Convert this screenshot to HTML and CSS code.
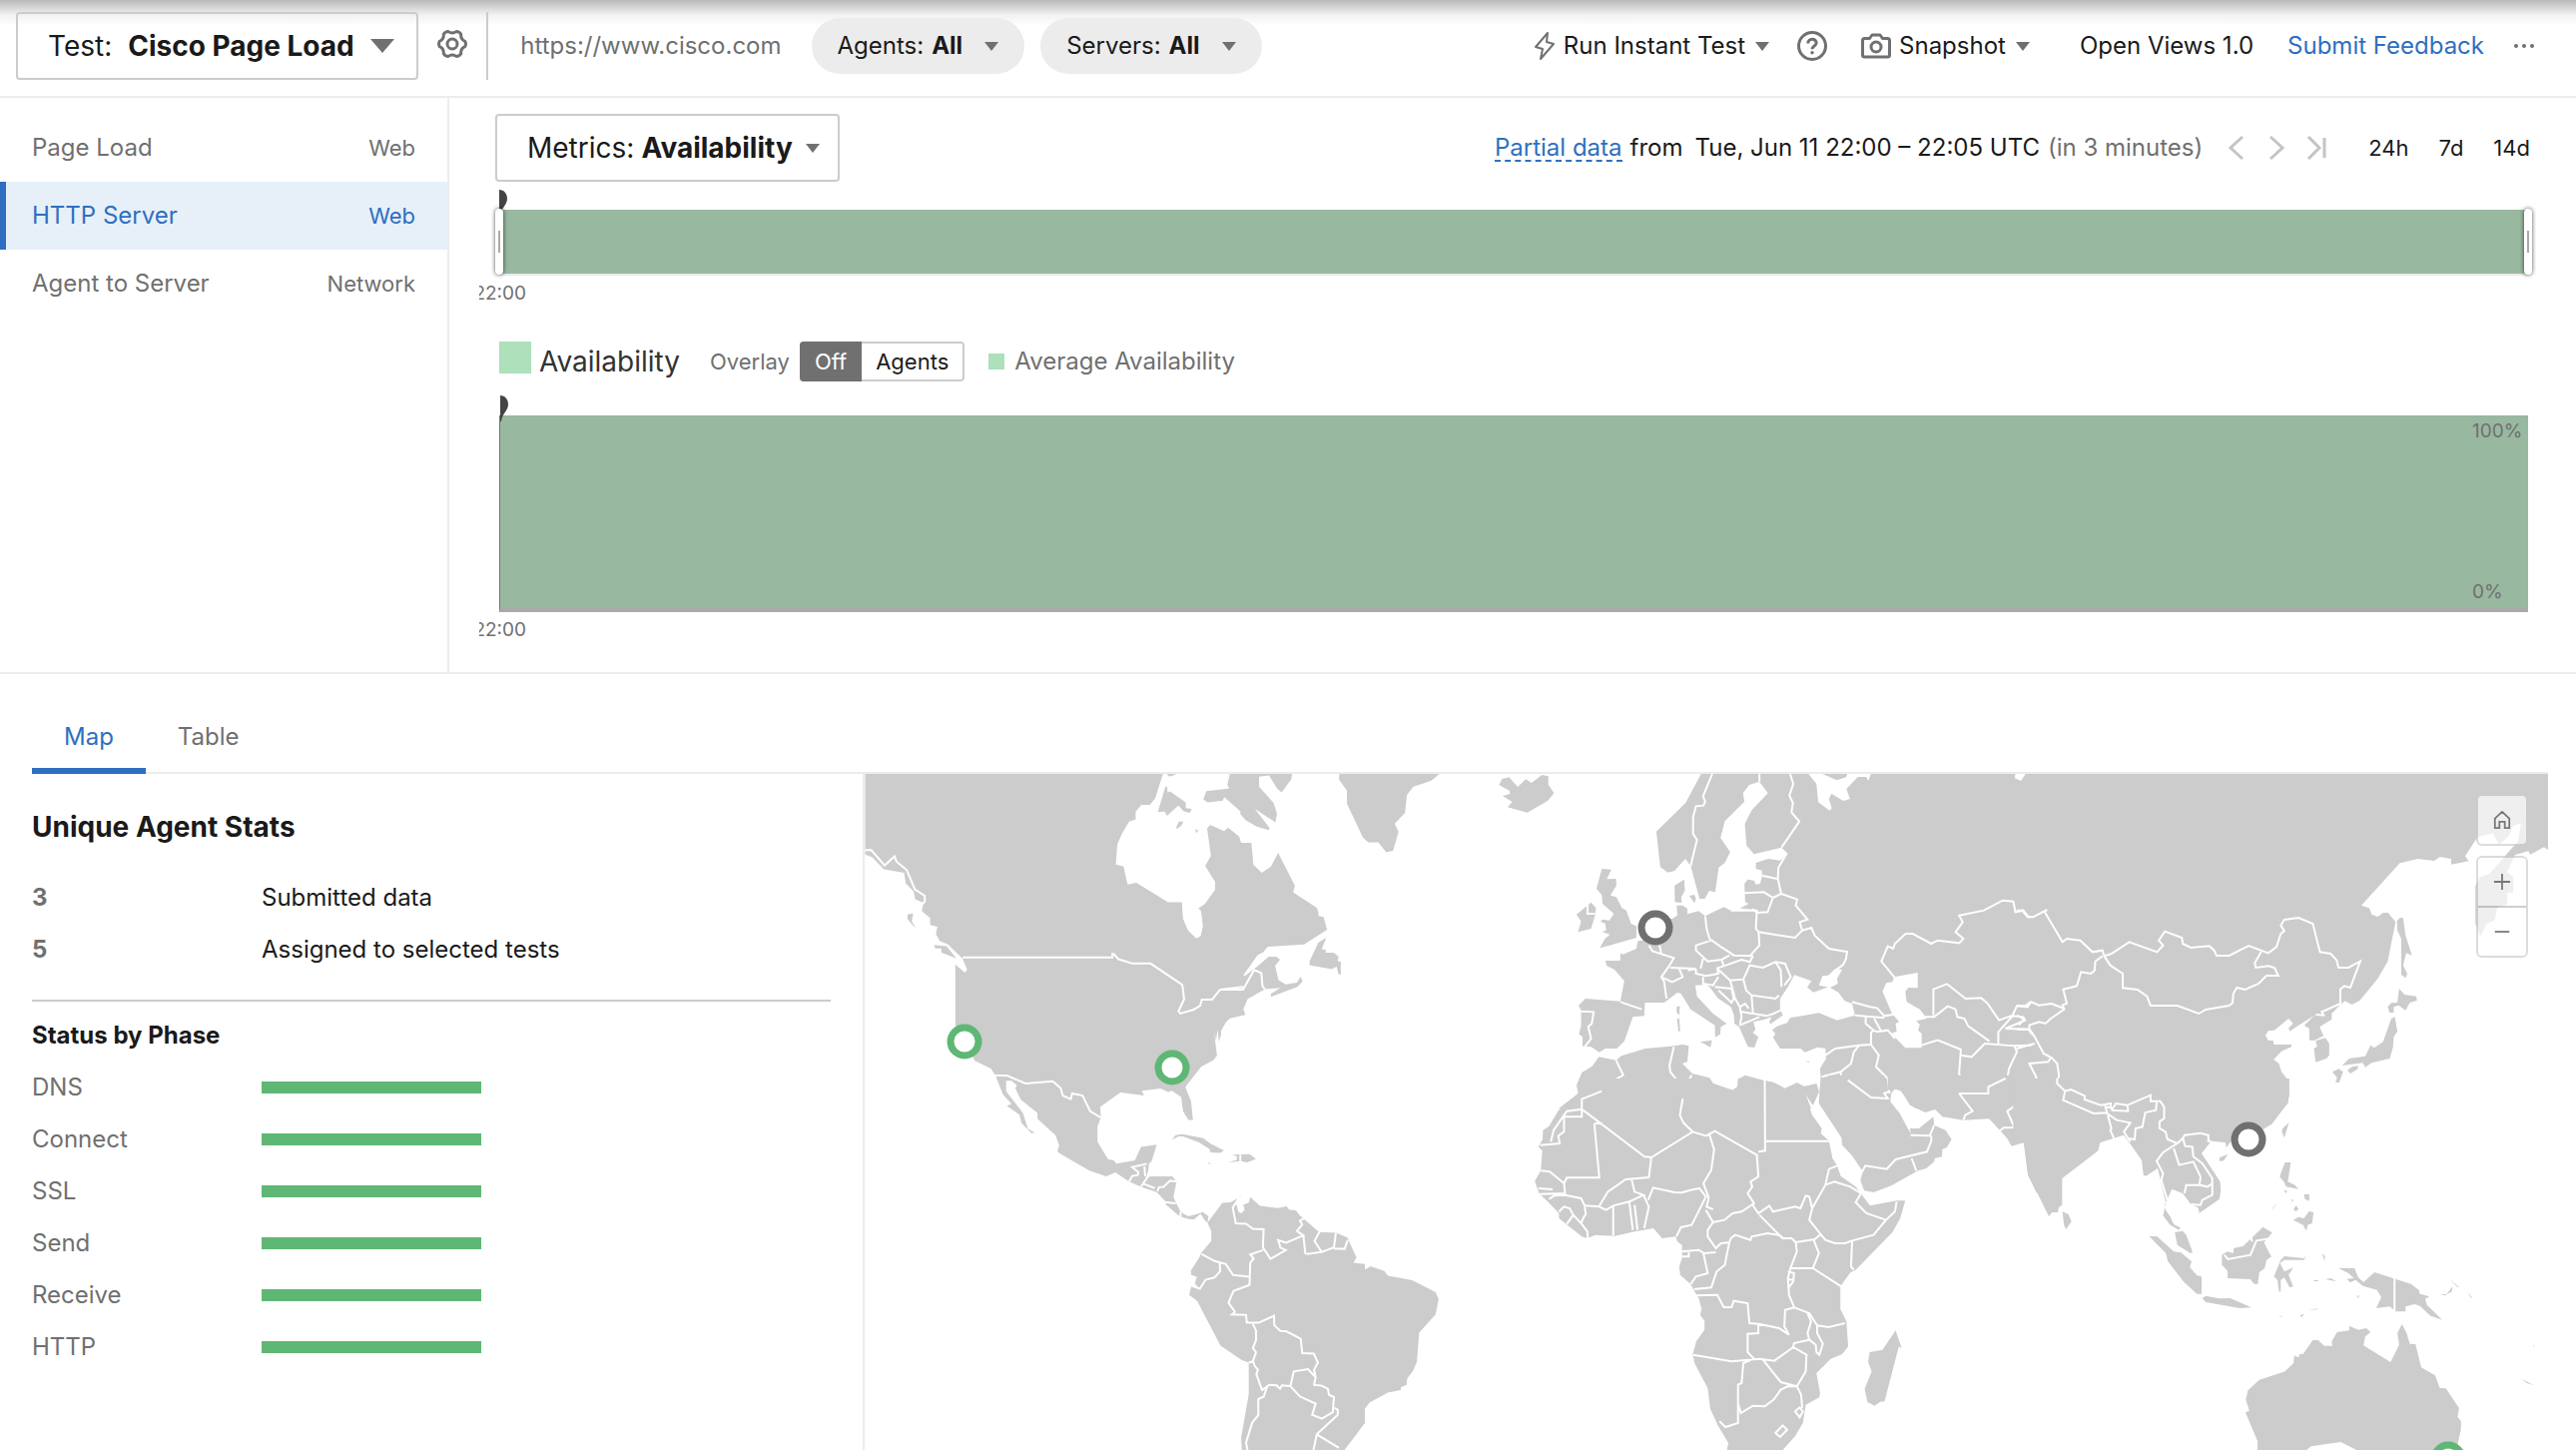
FILE: index.html
```html
<!DOCTYPE html>
<html lang="en">

<head>
    <meta charset="UTF-8">
    <meta name="viewport" content="width=device-width, initial-scale=1.0">
    <title>Cisco Page Load - Views</title>
    <link rel="stylesheet" href="styles.css">
</head>

<body>
    <header class="topbar">
        <div class="picker picker-test">
            <label for="test">Test:</label>
            <select id="test">
                <option>Cisco Page Load</option>
            </select>
            <svg class="caret caret-large" viewBox="0 0 24 14"><path d="M0 0H24L12 14Z"/></svg>
        </div>
        <button class="icon-button settings" type="button" aria-label="Test settings">
            <svg class="icon" viewBox="0 0 30 30"><path d="M27.700 12.300Q29.200 15 27.700 17.700Q23.200 19.800 23.700 24.700Q22.100 27.300 19 27.400Q15 24.500 11 27.400Q7.900 27.300 6.300 24.700Q6.800 19.800 2.300 17.700Q.8 15 2.300 12.300Q6.800 10.200 6.300 5.300Q7.900 2.700 11 2.600Q15 5.500 19 2.600Q22.100 2.700 23.700 5.300Q23.200 10.200 27.700 12.300Z"/><circle cx="15" cy="15" r="5"/></svg>
        </button>
        <div class="divider"></div>
        <span class="url">https://www.cisco.com</span>
        <div class="pill">
            <label for="agents">Agents:</label>
            <select id="agents">
                <option>All</option>
            </select>
            <svg class="caret" viewBox="0 0 14 9"><path d="M0 0H14L7 9Z"/></svg>
        </div>
        <div class="pill">
            <label for="servers">Servers:</label>
            <select id="servers">
                <option>All</option>
            </select>
            <svg class="caret" viewBox="0 0 14 9"><path d="M0 0H14L7 9Z"/></svg>
        </div>
        <div class="actions">
            <button class="action" type="button">
                <svg class="icon icon-bolt" viewBox="0 0 22 30"><path d="M14 2L2 16L9 18L7 28L20 13L13 11Z"/></svg>
                Run Instant Test
                <svg class="caret" viewBox="0 0 14 9"><path d="M0 0H14L7 9Z"/></svg>
            </button>
            <button class="icon-button help" type="button" aria-label="Help">
                <svg class="icon" viewBox="0 0 30 30"><circle cx="15" cy="15" r="13.500"/><path d="M10.800 12.500C10.800 7 19.200 7 19.200 12C19.200 15 15 15 15 18.200"/><circle class="dot" cx="15" cy="21.800" r="1.700"/></svg>
            </button>
            <button class="action" type="button">
                <svg class="icon" viewBox="0 0 30 30"><path d="M3.500 7.500H8.500L11 4H19L21.500 7.500H26.500Q28.500 7.500 28.500 9.500V24Q28.500 26 26.500 26H3.500Q1.500 26 1.500 24V9.500Q1.500 7.500 3.500 7.500Z"/><circle cx="15" cy="16" r="5"/></svg>
                Snapshot
                <svg class="caret" viewBox="0 0 14 9"><path d="M0 0H14L7 9Z"/></svg>
            </button>
            <a class="open-views" href="#">Open Views 1.0</a>
            <a class="feedback" href="#">Submit Feedback</a>
            <button class="icon-button" type="button" aria-label="More">
                <svg class="dots" viewBox="0 0 20 4"><circle cx="2" cy="2" r="2"/><circle cx="10" cy="2" r="2"/><circle cx="18" cy="2" r="2"/></svg>
            </button>
        </div>
    </header>

    <div class="overview">
        <nav class="sidebar">
            <a href="#"><span>Page Load</span><small>Web</small></a>
            <a class="active" href="#"><span>HTTP Server</span><small>Web</small></a>
            <a href="#"><span>Agent to Server</span><small>Network</small></a>
        </nav>

        <main class="charts">
            <div class="chart-toolbar">
                <div class="picker picker-metrics">
                    <label for="metrics">Metrics:</label>
                    <select id="metrics">
                        <option>Availability</option>
                    </select>
                    <svg class="caret" viewBox="0 0 14 9"><path d="M0 0H14L7 9Z"/></svg>
                </div>
                <div class="time-range">
                    <a class="partial" href="#">Partial data</a>
                    <span>from</span>
                    <span class="date">Tue, Jun 11 22:00 – 22:05 UTC</span>
                    <span class="muted">(in 3 minutes)</span>
                </div>
                <div class="pager">
                    <button type="button" aria-label="Previous"><svg viewBox="0 0 20 26"><path d="M16 2L4 13L16 24"/></svg></button>
                    <button type="button" aria-label="Next"><svg viewBox="0 0 20 26"><path d="M4 2L16 13L4 24"/></svg></button>
                    <button type="button" aria-label="Latest"><svg viewBox="0 0 20 26"><path d="M2 2L13 13L2 24M18 3V23"/></svg></button>
                </div>
                <div class="ranges">
                    <button type="button">24h</button>
                    <button type="button">7d</button>
                    <button type="button">14d</button>
                </div>
            </div>

            <div class="timeline">
                <svg class="pin" viewBox="0 0 8 26"><path d="M0 0C5 0 8 4 8 9C8 15 2 18 1 26H0Z"/></svg>
                <div class="handle handle-start"></div>
                <div class="handle handle-end"></div>
            </div>
            <div class="axis-label">22:00</div>

            <div class="legend">
                <span class="swatch"></span>
                <h2>Availability</h2>
                <span class="overlay-label">Overlay</span>
                <div class="toggle">
                    <button class="on" type="button">Off</button>
                    <button type="button">Agents</button>
                </div>
                <span class="swatch swatch-small"></span>
                <span class="muted">Average Availability</span>
            </div>

            <div class="plot">
                <svg class="pin" viewBox="0 0 8 26"><path d="M0 0C5 0 8 4 8 9C8 15 2 18 1 26H0Z"/></svg>
                <span>100%</span>
                <span>0%</span>
            </div>
            <div class="axis-label">22:00</div>
        </main>
    </div>

    <section class="details">
        <div class="tabs">
            <button class="active" type="button">Map</button>
            <button type="button">Table</button>
        </div>
        <div class="panels">
            <div class="stats">
                <h2>Unique Agent Stats</h2>
                <table>
                    <tr><th class="count">3</th><td>Submitted data</td></tr>
                    <tr><th class="count">5</th><td>Assigned to selected tests</td></tr>
                </table>
                <hr>
                <h3>Status by Phase</h3>
                <table>
                    <tr><th>DNS</th><td><div class="bar"></div></td></tr>
                    <tr><th>Connect</th><td><div class="bar"></div></td></tr>
                    <tr><th>SSL</th><td><div class="bar"></div></td></tr>
                    <tr><th>Send</th><td><div class="bar"></div></td></tr>
                    <tr><th>Receive</th><td><div class="bar"></div></td></tr>
                    <tr><th>HTTP</th><td><div class="bar"></div></td></tr>
                </table>
            </div>

            <div class="map">
                <svg class="world" viewBox="866 775 1686 677" preserveAspectRatio="xMinYMin slice">
                    <!-- Americas -->
                    <g transform="translate(860 770) scale(.38265 .43495)">
                        <path class="land" d="M17 10 797 10 776 68 762 83 740 83 725 98 725 116 708 121 690 148 677 173 673 220 693 224 704 266 727 262 810 307 846 307 849 345 862 372 884 390 895 385 901 362 896 327 889 321 905 312 933 278 933 260 907 223 922 200 912 137 920 129 957 143 967 135 996 156 1001 170 1028 170 1033 220 1055 239 1079 225 1098 193 1142 269 1137 284 1200 320 1205 339 1217 341 1226 370 1166 404 1071 409 1059 422 1044 429 1007 475 1010 477 1043 455 1073 432 1093 432 1103 439 1090 453 1099 486 1118 496 1147 492 1157 478 1162 489 1148 502 1079 525 1079 518 1104 504 1063 507 1018 530 1007 553 1012 566 972 574 962 582 948 604 949 610 943 628 940 600 935 625 930 603 935 640 938 660 928 671 897 685 855 732 870 765 875 808 863 808 849 788 844 755 820 741 810 744 790 736 741 741 747 752 685 745 632 778 634 803 625 823 625 858 653 899 668 901 674 909 723 901 739 870 780 865 767 903 760 909 758 925 752 942 765 938 821 938 832 950 824 985 830 998 843 1020 863 1030 885 1025 901 1020 916 1030 913 1045 905 1038 895 1024 878 1037 866 1037 840 1030 804 1003 801 994 780 974 762 969 739 962 708 950 672 929 648 938 604 925 526 885 520 880 525 867 515 843 468 805 468 792 424 761 410 735 414 728 400 718 386 718 386 742 430 792 443 828 460 837 453 839 426 815 421 796 388 776 400 771 378 750 358 706 346 690 304 672 285 640 253 590 253 450 278 469 284 462 272 437 234 404 212 396 202 380 206 363 187 359 187 343 165 327 170 308 148 300 144 282 123 263 119 239 66 231 35 203 17 197Z"/>
                        <path class="land" d="M803 40 808 42 808 54 815 52 856 77 856 90 872 92 866 101 850 97 837 84 807 108 801 98 783 99ZM830 137 838 121 850 121 846 129 836 137ZM881 138 889 142 884 148ZM805 10H833L824 15 812 17ZM972 10H1135L1132 24 1107 54 1095 45 1074 15 1048 18 1048 41 1086 78 1095 103 1091 123 1037 92 1076 136 1073 141 1042 133 1012 117 998 103 1000 98 957 65 953 73 914 77 902 70 910 51 970 45 965 36ZM1258 10H1522L1499 27 1452 41 1435 60 1430 101 1403 126 1413 145 1399 188 1381 192 1360 169 1334 169 1320 158 1278 80 1278 50 1257 24ZM1180 443 1203 400 1224 388 1212 415 1223 417 1222 423 1244 423 1256 432 1254 443 1262 444 1262 473 1256 473 1251 455 1238 461 1180 452ZM198 405 230 408 256 436 217 423 216 413 200 413ZM128 335 143 333 139 350 150 368 128 346ZM820 854 829 843 848 841 902 850 921 863 956 878 946 884 921 883 918 875 891 860 849 846 837 846ZM978 888 1023 887 1040 898 1017 906 1000 903 967 906 990 900 990 892ZM913 906 923 908 918 910Z"/>
                        <path class="land" d="M913 1045 952 999 974 998 1001 984 988 1000 994 1020 1002 1023 1010 1015 1007 1003 1021 999 1025 986 1050 1006 1097 1011 1120 1007 1127 1015 1144 1016 1155 1028 1205 1066 1250 1068 1279 1079 1303 1125 1295 1137 1325 1140 1325 1153 1340 1145 1376 1156 1385 1167 1449 1177 1510 1205 1518 1221 1510 1256 1467 1298 1461 1365 1451 1386 1436 1403 1434 1418 1419 1424 1419 1430 1385 1436 1337 1459 1325 1473 1325 1506 1270 1570H1003L1001 1540 1021 1440 1021 1367 1003 1361 947 1328 886 1225 865 1211 871 1190 893 1197 880 1185 885 1169 870 1165 870 1154 890 1127 898 1113 923 1087 923 1064Z"/>
                        <path class="border" d="M272 434H664V426H668L680 438 717 448 764 448 847 497 852 530 837 558 842 563 877 554 894 545 898 531 925 531 946 508 1006 508 1035 463 1054 470 1057 500 1063 507M1006 502 946 508M17 187 33 187 68 222 94 201 99 213 126 233 147 277 173 292 173 306 165 312M357 706 388 706 437 724 508 719 529 735 534 752 555 760 559 747 586 752 606 788 634 803M708 950 716 937 731 935 732 928 716 917 754 909M748 915 750 938M756 940 739 962M745 955 775 965M782 972 786 963 798 962 815 948 832 950M801 997 830 1000M843 1020 842 1032M999 888V904"/>
                        <path class="border" d="M997 986 979 1010 987 1046 1014 1047 1032 1059 1060 1060 1058 1102 1078 1128 1118 1108 1104 1102 1098 1085 1119 1091 1164 1074 1147 1064 1161 1049 1155 1040 1168 1034M1164 1074 1169 1115 1174 1117 1212 1112 1193 1087 1206 1066M1212 1112 1244 1102 1249 1068M1244 1104 1272 1105 1280 1085M1058 1108 1025 1118 1034 1127 1025 1137 1023 1188 981 1202 968 1229 985 1250 977 1256 1014 1257 1016 1275 1047 1275 1087 1259 1088 1281 1104 1294 1120 1295 1157 1312 1161 1345 1191 1346 1202 1367 1192 1383 1196 1400 1192 1418 1212 1420 1228 1427 1231 1441 1244 1446 1241 1481 1212 1496 1187 1487 1196 1461 1155 1445 1130 1421 1139 1387 1176 1382 1196 1400M1130 1421 1108 1419 1103 1427 1094 1419 1075 1418 1056 1430 1041 1394 1045 1383 1037 1375 1032 1363 1040 1343 1032 1333 1040 1315 1040 1293 1032 1278M1032 1363 1021 1367M1070 1420 1060 1445 1046 1451 1046 1488 1030 1505 1014 1551 1018 1570M898 1117 932 1133 961 1140 980 1165 1023 1169M945 1136 946 1157 931 1171 908 1176 893 1197 871 1190M1244 1471 1254 1475 1254 1487 1199 1532 1190 1570M1199 1532 1257 1563"/>
                    </g>
                    <!-- Europe and western Asia -->
                    <g transform="translate(1480 770) scale(.35714 .33333)">
                        <path class="land" d="M60 48 68 30 88 25 112 54 135 31 151 42 180 18 198 22 198 47 214 73 196 96 139 131 84 115 97 99 70 81 91 75 89 65ZM627 14H788L790 38 761 48 744 73 748 98 693 157 681 207 708 250 693 282 676 296 666 370 649 366 637 390 622 390 597 290 582 270 552 306 533 311 512 295 501 188 583 102ZM553 400 552 350 579 332 581 365 571 385 572 402ZM593 381 608 378 612 390 608 403ZM348 300 375 302 362 331 388 330 389 350 372 380 389 385 404 417 417 425 430 465 445 472 445 507 365 532 342 538 357 510 371 497 348 490 360 485 358 465 344 458 351 452 369 455 382 435 350 405 348 378 333 360ZM277 437 318 401 332 418 329 440 318 480 281 490 290 458ZM558 715 567 712 565 740 558 730ZM559 752 565 748 568 788 563 788ZM624 820 657 815 653 836ZM918 878H932L928 881Z"/>
                        <path class="land" d="M788 14H927L950 45 955 100 987 125 993 118 985 90 992 74 1025 96 1044 90 1034 60 1066 24 1090 24 1095 36 1103 14H1508L1506 28 1524 36 1538 14H1568V1020H1228L1212 1005 1186 967 1170 961 1160 975 1157 1000 1172 1020H985L957 1000 962 925 960 900 977 870 975 840 953 836 918 851 905 840 848 840 828 806 835 796 826 784 842 772 868 763 876 748 957 733 1008 755 1058 740 1050 705 1029 697 1012 672 985 655 941 671 924 656 936 637 888 619 870 655 848 690 848 722 856 740 823 765 817 763 824 745 806 752 773 760 779 782 772 793 787 805 776 837 758 835 733 775 720 765 718 737 710 715 675 690 650 655 640 648 610 650 615 683 660 735 698 765 682 775 680 797 666 806 665 770 597 722 570 675 560 672 523 702 469 702 467 742 435 745 411 818 390 840 358 840 341 851 318 835 294 833 294 805 284 797 290 770 290 725 283 710 302 690 400 698 411 637 383 602 362 592 358 576 400 576 400 553 408 557 445 540 449 517 462 515 500 450 545 450 560 440 558 410 575 410 588 420 588 436 620 427 638 442 690 415 710 425 775 420 735 419 760 405 750 400 748 345 757 332 775 335 780 347 792 345 797 325 797 305 780 300 780 282 815 270 848 275 870 255 852 236 775 256 754 230 749 165 769 123 814 73 790 38ZM965 14H1037L1033 25 1007 34Z"/>
                        <path class="land" d="M227 1020 282 975 277 950 292 912 321 893 340 865 388 875 403 862 470 840 540 833 575 828 592 832 588 880 574 885 602 915 650 928 660 945 715 965 730 955 733 930 750 920 800 935 830 942 862 960 895 943 915 953 950 947 957 970 940 1010 918 973 935 1020Z"/>
                        <path class="water" d="M957 650 967 622 983 620 1003 600 1022 603 1008 630 1010 645 988 657ZM1168 625 1234 612V658L1208 657 1199 668 1203 700 1240 722 1260 750 1230 757 1240 768 1235 785 1245 795 1245 838 1199 838 1160 795 1175 788 1172 765 1182 760 1162 735 1135 668 1146 643 1163 640Z"/>
                        <path class="border" d="M658 14 632 82 638 98 633 110 612 112 604 145 604 195 615 213 597 292M790 14V38M876 14 885 45 874 80 884 102 880 130 902 158 852 236M866 255 843 297 842 330 851 375 896 392 892 410 925 452 903 460 910 485 936 477 945 500 985 540 1036 549 1033 570 1025 588 1003 605M797 320 840 330M748 373 803 370 828 387 851 375M828 387 813 430 783 432 770 420M710 425 783 425 780 480 788 490 890 507 908 487M788 490 790 530 765 560M638 442 642 480 650 510 683 535 705 550 718 560 772 562M655 515 612 530 612 545 645 578 684 573 706 560M684 573 690 592 740 573 763 580 772 562M632 570 625 600M540 597 612 600 590 605M612 600 612 615 640 622 675 615 672 598 690 592M480 530 490 547 550 568 538 590 515 625 523 640 528 680 530 690M510 530 515 555M565 600 575 625 545 640 515 625M672 600 708 635 745 632 763 590 800 597 835 580 862 585 878 625 860 650M835 580 850 605 852 655M745 632 753 665 768 680 835 690 845 680M768 680 772 735 810 742 830 735 850 725M632 625 632 645 660 650 675 625M665 655 712 660 718 690 710 705M675 665 710 700M708 635 722 690 735 715M735 770 740 745 735 715 750 705 760 720M740 730 770 735M735 770 790 745M400 700 460 722M290 728 325 730 320 765 310 775 318 810 300 835M308 408V435H329"/>
                        <path class="border" d="M1050 700 1100 715 1120 718 1140 742 1165 738M1058 740 1140 748M1088 745 1088 765 1110 785 1120 790 1150 785 1170 810M1112 750 1130 785M1110 785 1103 792 1103 828 1070 830 1003 840 975 860M1103 828 1125 860 1117 895 1150 930 1155 975M1070 830 1055 850 1047 885 1018 910 965 925M1018 910 1020 930 1040 935 1103 985 1150 988M1020 930 985 940 1000 962 975 985 957 982M1168 625 1132 578 1150 533 1165 540 1170 525 1200 495 1220 495 1272 525 1290 515 1350 523 1362 510 1340 490 1360 460 1350 440 1420 425 1472 395 1502 398 1508 430 1530 425 1545 445 1568 445M1278 740V662L1316 646 1368 690 1412 688 1430 705 1462 755 1500 740 1512 712 1535 712 1550 700M1245 745 1280 745 1318 713 1340 722 1345 745 1365 750 1375 772 1435 818M1245 830 1290 815 1355 843 1350 915 1365 955 1350 975M1355 860 1385 865 1422 825 1505 832 1512 850 1490 900 1485 930 1435 955M1460 825V790L1500 742 1530 745 1535 755 1480 780 1545 782 1568 822M1505 832 1568 830M388 875 408 920 375 940 348 970 292 992V1020M550 835 538 890 540 910 555 930 575 990 572 1020M600 920 575 965M803 935 805 1020"/>
                    </g>
                    <!-- Africa and Arabia -->
                    <g transform="translate(1480 1080) scale(.35714 .33333)">
                        <path class="land" d="M285 0 282 45 227 95 200 143 183 155 182 183 170 205 181 217 177 277 160 308 172 345 195 368 228 405 228 420 248 437 292 475 307 480 330 470 385 473 440 460 493 450 517 480 555 475 560 490 573 500 573 540 565 565 568 590 597 618 608 640 620 660 628 692 624 710 636 728 636 755 613 790 603 828 608 855 645 930 652 992 675 1045 703 1095 698 1120H852L890 1075 912 1035 920 980 958 958 960 945 950 885 990 842 1022 828 1039 805 1034 730 1017 692 1017 625 1045 583 1060 575 1163 462 1185 420 1199 367 1175 367 1100 382 1078 350 1060 325 1018 293 1008 262 995 240 985 187 962 165 965 150 938 110 918 45 940 80 957 40 950 15 915 25 895 13 862 30 830 12 800 5 750 0 730 0 728 25 715 35 660 15 650 0Z"/>
                        <path class="land" d="M960 20 985 -10H1140L1150 40 1158 72 1182 102 1214 165 1212 150 1237 150 1278 115 1280 140 1312 155 1329 183 1315 208 1303 212 1302 235 1282 240 1280 250 1258 270 1235 277 1160 322 1110 342 1084 337 1073 305 1080 280 1050 232 1022 200 1020 178 957 75ZM1170 32 1188 36 1212 80 1255 102 1283 93 1303 115 1362 125 1434 121 1465 157 1485 180 1497 203 1531 193 1543 290 1568 345V-10H1150L1150 35ZM1172 757 1189 810 1181 805 1141 970 1129 971 1113 983 1093 972 1085 932 1105 880 1095 853 1099 822 1135 815Z"/>
                        <path class="border" d="M1155 38 1140 45 1150 60 1103 57 1038 5M1214 170 1268 172 1280 140M1272 172 1272 188 1260 220 1172 243 1147 272 1087 262 1077 282M1217 240 1230 277M1350 45 1388 98 1367 110 1362 125M1350 45H1432V25L1480 0M1560 0 1535 62 1485 98 1505 147 1475 148 1465 157"/>
                        <path class="border" d="M348 38 292 62V115H242V160L226 172 230 195 175 200M292 92 250 98 213 155 205 190M292 92 468 235 487 237 603 160 577 133 567 110 575 60M327 135H350M327 135 341 298 250 298 242 315 202 280 177 277M242 315 245 345 172 347M170 330 210 333M245 350 290 360 300 382 340 385 365 340 415 303 480 297 487 237M200 362 215 352 245 350M340 385 360 395 380 382 425 370 435 455M380 382V472M425 370 465 350 440 340 432 305M440 380 448 455M465 350 480 385 467 450M478 365 492 328 552 342 572 343 605 333 622 330 640 355 600 440 570 447 557 475M603 160 640 172 665 158 783 230 787 295 765 310 770 325 757 345 775 375 740 400 715 405 692 425 660 432 645 455 645 475 668 510 682 495 703 493M650 170 663 213 655 275 633 315 648 358 642 385 660 393M640 395 660 432M805 0 806 217 787 220M806 188H985M770 378 787 405 818 382 828 400 890 385 905 390 920 352 930 355 938 390 930 425 962 468 945 483 892 492 880 480 855 480 790 410M938 390 975 320 985 272 1008 262M975 320 1000 310 1045 325 1075 345 1060 372 1090 405 1145 425 1170 400 1175 370M1145 425 1110 470 1050 487 1030 495 1002 495 975 485 962 468M1050 487 1047 565 1055 575"/>
                        <path class="border" d="M705 495 710 480 722 470 765 485 768 475 812 465 845 470 860 482M892 492 895 520 877 570 940 570 957 525 942 485M940 570 1020 625M877 570 870 600 873 650 888 688 930 705 952 742 985 747 1030 735M888 688 862 695 860 745 873 770 845 750 787 737 762 735 757 675 718 668 712 687 690 687 672 650 610 652M705 495 693 560 670 580 655 628 607 633M572 520 620 515 635 525 668 522M633 525 640 560 645 585 612 595 597 618M573 535H592V522M787 737 787 765 757 767 757 822 775 842M605 830 712 850 790 842 832 848 885 807 887 795 930 785 925 765 935 730 925 705M930 785 948 800 950 822 958 830 968 797 952 765V742M775 842 745 855 740 915 730 920 730 1035 695 1047 678 1030M730 975 738 1005 772 983 805 985 830 965 850 935 870 925 895 925 907 950 910 990M800 845 850 912 895 925 920 880 922 830 885 807M890 1000 903 988 912 1000 903 1018ZM835 1065 855 1042 868 1055 848 1077ZM228 400 242 385 258 390 268 410 290 435 298 415 303 408 300 385M268 410 250 437M290 435 308 460V480M870 580 887 585 885 610 872 628M870 603 885 605"/>
                    </g>
                    <!-- Northern and eastern Asia -->
                    <g transform="translate(2020 770) scale(.35714 .33333)">
                        <path class="land" d="M25 14H1490V243L1478 235 1440 257 1434 247 1397 258 1375 310 1392 325V372H1375V408L1348 415 1340 455 1318 465 1300 503 1286 465 1286 350 1300 325 1325 315 1392 233 1405 220 1414 163 1392 170 1380 200 1352 228 1335 193 1292 205 1257 262 1267 277 1218 287 1218 270 1187 264 1170 276 1125 270 1074 283 966 410 988 418 995 437 1012 444 1027 432 1041 432 1062 460 1040 578 1012 630 962 695 940 708 920 697 905 710 883 735 883 752 849 775 860 802 835 815H820V780L806 770 835 740 790 770 765 788 762 778 775 765 762 750 722 785 705 787 697 800 705 815 720 817 720 828 770 828 770 835 742 848 720 873 735 885 742 910 764 940 754 955 764 975 760 1005 748 1020H40V36H12Z"/>
                        <path class="land" d="M838 817 865 808 876 825 876 860 868 870 838 881 833 840 842 835ZM1066 455 1075 447 1083 447 1090 500 1108 560 1092 553 1083 590 1095 615 1090 628 1078 618 1078 510 1067 485ZM1072 660 1087 678 1120 683 1122 696 1102 702 1090 725 1070 710 1057 715 1057 732 1045 732 1040 715 1050 703 1067 702ZM1050 750 1060 745 1067 788 1057 805 1055 835 1046 870 995 883 977 896 970 883 912 891 932 870 977 863 992 830 1002 838 1027 820ZM885 910 903 901 915 910 904 942 893 941 898 928ZM927 905 940 895 957 892 955 902 935 915Z"/>
                        <path class="border" d="M0 425 15 425 30 445 45 445 85 423M78 430 128 520 140 510 178 515 212 550 240 545 245 562 265 555 315 520 393 550 410 530 398 515 415 488 463 507 465 525 488 537 540 532 553 545 560 561 595 561 650 531 705 553 728 535 740 495 750 487 740 470 750 453 790 447 830 465 850 550 880 555 897 575 902 597 930 597 963 578 935 657 918 652 907 662V708M245 562 262 590 297 615V658L338 663 365 683 375 711 450 711 510 735 530 723 595 711 605 703 607 675 617 657 640 663 678 645 700 621 733 621 723 598 707 592 670 597 667 583 685 550M240 562 220 578 218 605 208 615 180 610 168 652 130 662 140 705 128 710 133 722 95 750 80 765 62 760 35 770 35 782 50 805 75 855 98 868 113 885 118 920 113 945 145 965 190 983 235 1010M0 712 30 715 40 700 62 710 97 705 133 720M0 782H35M0 840 50 825M0 740 20 752 5 770M95 868 88 880 35 885 55 928 25 990 0 1010M907 705 855 730 860 740 838 738"/>
                    </g>
                    <!-- South-east Asia and Australia -->
                    <g transform="translate(2020 1080) scale(.35714 .33333)">
                        <path class="land" d="M-10 0H764L764 45 760 73 715 137 690 153 600 190 587 208 585 192 545 188 518 225 570 310 572 335 568 362 512 404 508 388 488 378 465 345 435 332 415 378 417 395 430 415 440 438 458 448 455 455 430 440 410 412 418 375 395 270 362 293 355 290 350 245 317 195 300 170 270 180 233 193 228 217 127 300V380L117 388 115 402 98 402 90 415 32 290 20 193 0 196 -10 196Z"/>
                        <path class="land" d="M443 462 465 458 475 470 493 522 487 525 450 500ZM128 400 145 408 153 430 138 453 132 440ZM568 238 592 227 580 247 568 248ZM745 150 763 133 750 178 743 160ZM371 474H393L440 520 460 523 490 550 485 567 505 592 518 595V647H505L467 610 423 548 418 525ZM520 660 530 653 567 661 598 660 658 688 625 690 530 672ZM575 530 590 520 607 525 608 510 635 503 690 446 716 463 705 478 693 492 707 523 714 535 700 545 695 570 680 582 676 617 665 617 655 603 591 600V578L575 560ZM740 545 750 534 805 540 812 530 805 545 750 545 738 555 750 580 775 568 762 590 775 625 765 628 750 598 740 605 740 640 735 640 731 605 721 595ZM752 252H768L760 310 780 320 790 332 755 325 750 312 737 295ZM805 348H820V368L808 362ZM775 425 790 416 805 420 820 398 832 403 828 435 815 440 812 458 803 440ZM783 382 790 392 782 400 776 392ZM712 398 725 378 728 376 717 392ZM748 337H758L755 345ZM770 362 776 366 772 372ZM856 525 864 533 863 550ZM865 603 880 600 897 610ZM832 606H845V609H832ZM955 652 960 652 957 662ZM730 708 748 718 742 716ZM795 710 806 708 797 718ZM820 696 845 690 840 694Z"/>
                        <path class="land" d="M902 570H947L957 597 972 612 1003 582 1105 617 1127 635 1130 647 1157 655 1145 662 1150 680 1193 725 1160 713 1130 683 1115 678 1090 685V700H1062L1045 685 1008 690 1022 657 1010 635 970 623 950 605 935 613 925 602 945 600 930 585ZM1187 648 1205 648 1222 625 1220 640 1200 652ZM1212 600 1240 627 1236 627ZM1264 640 1277 660 1272 658ZM1415 902 1450 922 1430 915ZM1448 800 1453 805H1449ZM932 743 958 755 980 750 992 762 977 775 972 802 1048 852 1072 800 1067 765 1080 738 1093 765 1102 797 1118 798 1134 868 1173 892 1186 930 1203 931 1240 990 1236 1017 1246 1030 1245 1055 1232 1120H960L908 1092 825 1105 808 1120H675V1090L641 1003 652 998 642 965 648 937 680 905 752 880 776 855 778 832 790 838 793 828 803 827 830 786 845 786 862 803 885 803 883 790 898 762 932 757Z"/>
                        <path class="border" d="M113 0 113 15 135 38 152 33 190 52 190 63 235 80 263 75 263 88 248 85 253 103 215 105 130 65 135 38M265 95 278 75 310 80 375 50 375 68 402 68 413 85 413 120 400 130 400 150 417 160 422 182 450 195M265 95 312 98 310 80M253 105 280 125 318 133 300 160 318 190M255 110 265 150 262 155 272 180M392 72 390 95 360 102 352 145 333 150 330 183 315 180M450 195 467 178 470 170 515 164 537 170 537 188 545 188M450 195 410 222 392 248 410 285 405 305 422 365M440 210 455 260 495 250 515 295 512 320 475 320 470 345M465 178 472 203 492 205 495 235 520 255 548 300 548 350 520 365 515 380 488 378M512 320 535 325 548 315M582 530 592 543 655 530 672 487 712 481M655 470 660 490M1059 595V702"/>
                    </g>
                    <!-- Agents -->
                    <circle class="agent agent-ok" cx="966" cy="1043" r="14"/>
                    <circle class="agent agent-ok" cx="1174" cy="1069" r="14"/>
                    <circle class="agent agent-ok" cx="2452" cy="1461" r="14"/>
                    <circle class="agent" cx="1658" cy="929" r="14"/>
                    <circle class="agent" cx="2252" cy="1141" r="14"/>
                </svg>
                <div class="map-controls">
                    <button class="home" type="button" aria-label="Reset map"><svg viewBox="0 0 20 20"><path d="M2 8.500L10 1L18 8.500V19H13V12H7V19H2Z"/></svg></button>
                    <div class="zoom">
                        <button type="button" aria-label="Zoom in"><svg viewBox="0 0 20 20"><path d="M1 10H19M10 1V19"/></svg></button>
                        <button type="button" aria-label="Zoom out"><svg viewBox="0 0 20 20"><path d="M2 10H18"/></svg></button>
                    </div>
                </div>
            </div>
        </div>
    </section>
</body>

</html>
```
FILE: styles.css
```css
* {
    box-sizing: border-box;
}

body {
    margin: 0;
    min-height: 100vh;
    display: flex;
    flex-direction: column;
    overflow: hidden;
    background-color: #fff;
    color: #1a1a1a;
    font-family: Inter, "Liberation Sans", sans-serif;
    font-size: 24px;
    line-height: 32px;
}

a {
    color: inherit;
    text-decoration: none;
}

button,
select {
    margin: 0;
    padding: 0;
    border: none;
    background: none;
    color: inherit;
    font: inherit;
    cursor: pointer;
}

select {
    appearance: none;
    font-weight: 700;
}

h2,
h3 {
    margin: 0;
}

svg {
    display: block;
    flex: none;
}

.muted {
    color: #707070;
}

/* Top bar */
.topbar {
    display: flex;
    align-items: center;
    padding: 12px 42px 16px 16px;
    border-bottom: 2px solid #ececec;
    background: linear-gradient(#b8b8b8, #d4d4d4 7px, #f2f2f2 15px, #fff 26px);
}

.picker {
    display: flex;
    align-items: center;
    height: 68px;
    border: 2px solid #ccc;
    border-radius: 4px;
    font-size: 28px;
}

.picker-test {
    gap: 16px;
    padding: 0 22px 0 30px;
}

.picker-metrics {
    gap: 7px;
    padding: 0 18px 0 30px;
}

.caret {
    width: 14px;
    height: 9px;
    fill: #707070;
}

.caret-large {
    width: 24px;
    height: 14px;
}

.picker-metrics .caret {
    margin-left: 6px;
}

.icon {
    width: 30px;
    height: 30px;
    fill: none;
    stroke: #707070;
    stroke-width: 3;
    stroke-linejoin: round;
}

.icon-bolt {
    width: 22px;
    stroke-width: 2;
}

.icon .dot {
    fill: #707070;
    stroke: none;
}

.settings {
    margin: 0 0 4px 19px;
}

.divider {
    align-self: stretch;
    width: 2px;
    margin: 0 32px 0 19px;
    background-color: #ccc;
}

.url {
    margin-right: 30px;
    color: #707070;
}

.pill {
    display: flex;
    align-items: center;
    gap: 8px;
    height: 56px;
    margin-right: 16px;
    padding: 0 26px;
    border-radius: 28px;
    background-color: #ececec;
}

.pill .caret {
    margin-left: 14px;
}

.actions {
    display: flex;
    align-items: center;
    margin-left: auto;
}

.action {
    display: flex;
    align-items: center;
    gap: 8px;
}

.action .caret {
    margin-left: 2px;
}

.help {
    margin: 0 34px 0 28px;
}

.open-views {
    margin-left: 50px;
}

.feedback {
    margin: 0 30px 0 34px;
    color: #2e6fc0;
}

.dots {
    width: 20px;
    height: 4px;
    fill: #707070;
}

/* Test list and charts */
.overview {
    display: flex;
    border-bottom: 2px solid #ececec;
}

.sidebar {
    flex: none;
    width: 450px;
    padding-top: 16px;
    border-right: 2px solid #ececec;
}

.sidebar a {
    display: flex;
    align-items: center;
    justify-content: space-between;
    height: 68px;
    padding: 0 32px 0 26px;
    border-left: 6px solid transparent;
    color: #707070;
}

.sidebar small {
    font-size: 22px;
}

.sidebar .active {
    border-color: #2e6fc0;
    background-color: #e7f0f8;
    color: #2e6fc0;
}

.charts {
    flex: 1;
    padding: 16px 48px 26px 50px;
}

.chart-toolbar {
    display: flex;
    align-items: center;
    margin: 0 -2px 0 -4px;
}

.time-range {
    display: flex;
    gap: 8px;
    margin-left: auto;
}

.partial {
    height: 30px;
    border-bottom: 2px dashed #2e6fc0;
    color: #2e6fc0;
}

.date {
    margin-left: 4px;
}

.pager {
    display: flex;
    gap: 20px;
    margin: 0 42px 0 24px;
}

.pager svg {
    width: 20px;
    height: 26px;
    fill: none;
    stroke: #c4c4c4;
    stroke-width: 3;
}

.ranges {
    display: flex;
    gap: 30px;
    font-size: 22px;
}

.timeline {
    position: relative;
    height: 66px;
    margin-top: 28px;
    border-bottom: 2px solid #e8e8e8;
    background-color: #98b8a0;
}

.pin {
    position: absolute;
    top: -20px;
    left: 0;
    width: 8px;
    height: 26px;
    fill: #444;
}

.handle {
    position: absolute;
    top: -1px;
    width: 8px;
    height: 66px;
    padding: 22px 3px;
    border-radius: 4px;
    background-color: #fff;
    box-shadow: 0 0 4px rgba(0, 0, 0, 0.7);
}

.handle::after {
    content: "";
    display: block;
    height: 22px;
    background-color: #aaa;
}

.handle-start {
    left: -4px;
}

.handle-end {
    right: -4px;
}

.axis-label {
    display: flex;
    justify-content: flex-end;
    overflow: hidden;
    width: 47px;
    margin-top: 2px;
    margin-left: -20px;
    color: #707070;
    font-size: 19px;
}

.legend {
    display: flex;
    align-items: center;
    height: 40px;
    margin: 32px 0 34px;
}

.legend h2 {
    margin-right: 30px;
    color: #333;
    font-size: 28px;
    font-weight: 400;
}

.swatch {
    width: 32px;
    height: 32px;
    margin-right: 8px;
    margin-bottom: 8px;
    background-color: #ade0bb;
}

.swatch-small {
    width: 16px;
    height: 16px;
    margin: 0 10px 0 24px;
}

.overlay-label {
    margin-right: 10px;
    color: #707070;
    font-size: 22px;
}

.toggle {
    display: flex;
    height: 40px;
    border: 2px solid #ccc;
    border-radius: 4px;
    font-size: 22px;
}

.toggle button {
    padding: 0 14px;
}

.toggle .on {
    margin: -2px 0 -2px -2px;
    padding: 0 15px;
    border-radius: 4px 0 0 4px;
    background-color: #707070;
    color: #fff;
}

.plot {
    display: flex;
    flex-direction: column;
    justify-content: space-between;
    position: relative;
    height: 197px;
    border-bottom: 4px solid #aaa;
    border-left: 1px solid #707070;
    background-color: #98b8a0;
    color: #707070;
    font-size: 19px;
}

.plot span {
    align-self: flex-end;
    width: 56px;
}

/* Map tab */
.details {
    flex: 1;
    display: flex;
    flex-direction: column;
    padding: 28px 28px 0 0;
}

.tabs {
    display: flex;
    margin-left: 32px;
    border-bottom: 2px solid #ececec;
    color: #707070;
}

.tabs button {
    height: 70px;
    padding: 0 32px;
}

.tabs .active {
    height: 72px;
    margin-bottom: -2px;
    padding-top: 4px;
    border-bottom: 6px solid #2e6fc0;
    color: #2e6fc0;
}

.panels {
    flex: 1;
    display: flex;
}

.stats {
    flex: none;
    width: 866px;
    padding: 32px 32px 0;
    border-right: 2px solid #ececec;
}

.stats h2 {
    height: 66px;
    line-height: 42px;
    font-size: 28px;
}

.stats h3 {
    height: 52px;
    line-height: 52px;
    font-size: 24px;
}

.stats hr {
    margin: 24px 0 8px;
    border: none;
    border-top: 2px solid #ccc;
}

.stats table {
    border-collapse: collapse;
}

.stats th {
    width: 230px;
    height: 52px;
    padding: 0;
    color: #707070;
    font-weight: 400;
    text-align: left;
}

.stats td {
    padding: 0;
}

.stats .count {
    font-weight: 700;
}

.bar {
    width: 220px;
    height: 12px;
    background-color: #5fb775;
}

.map {
    flex: 1;
    position: relative;
    overflow: hidden;
}

.world {
    width: 100%;
    height: 100%;
}

.land {
    fill: #ccc;
}

.water {
    fill: #fff;
}

.border {
    fill: none;
    stroke: #fff;
    stroke-width: 2px;
    vector-effect: non-scaling-stroke;
}

.agent {
    fill: #fff;
    stroke: #707070;
    stroke-width: 7px;
}

.agent-ok {
    stroke: #5fb775;
}

.map-controls {
    position: absolute;
    top: 20px;
    right: 20px;
    width: 52px;
    opacity: 0.7;
}

.map-controls button {
    display: flex;
    align-items: center;
    justify-content: center;
    width: 100%;
    height: 48px;
    background-color: #fff;
}

.map-controls svg {
    width: 18px;
    height: 18px;
    fill: none;
    stroke: #555;
    stroke-width: 2;
}

.map-controls .home {
    height: 52px;
    margin-bottom: 10px;
    border: 2px solid #ccc;
    border-radius: 6px;
}

.zoom {
    overflow: hidden;
    border: 2px solid #ccc;
    border-radius: 6px;
}

.map-controls .zoom button + button {
    height: 50px;
    border-top: 2px solid #bbb;
}
```
